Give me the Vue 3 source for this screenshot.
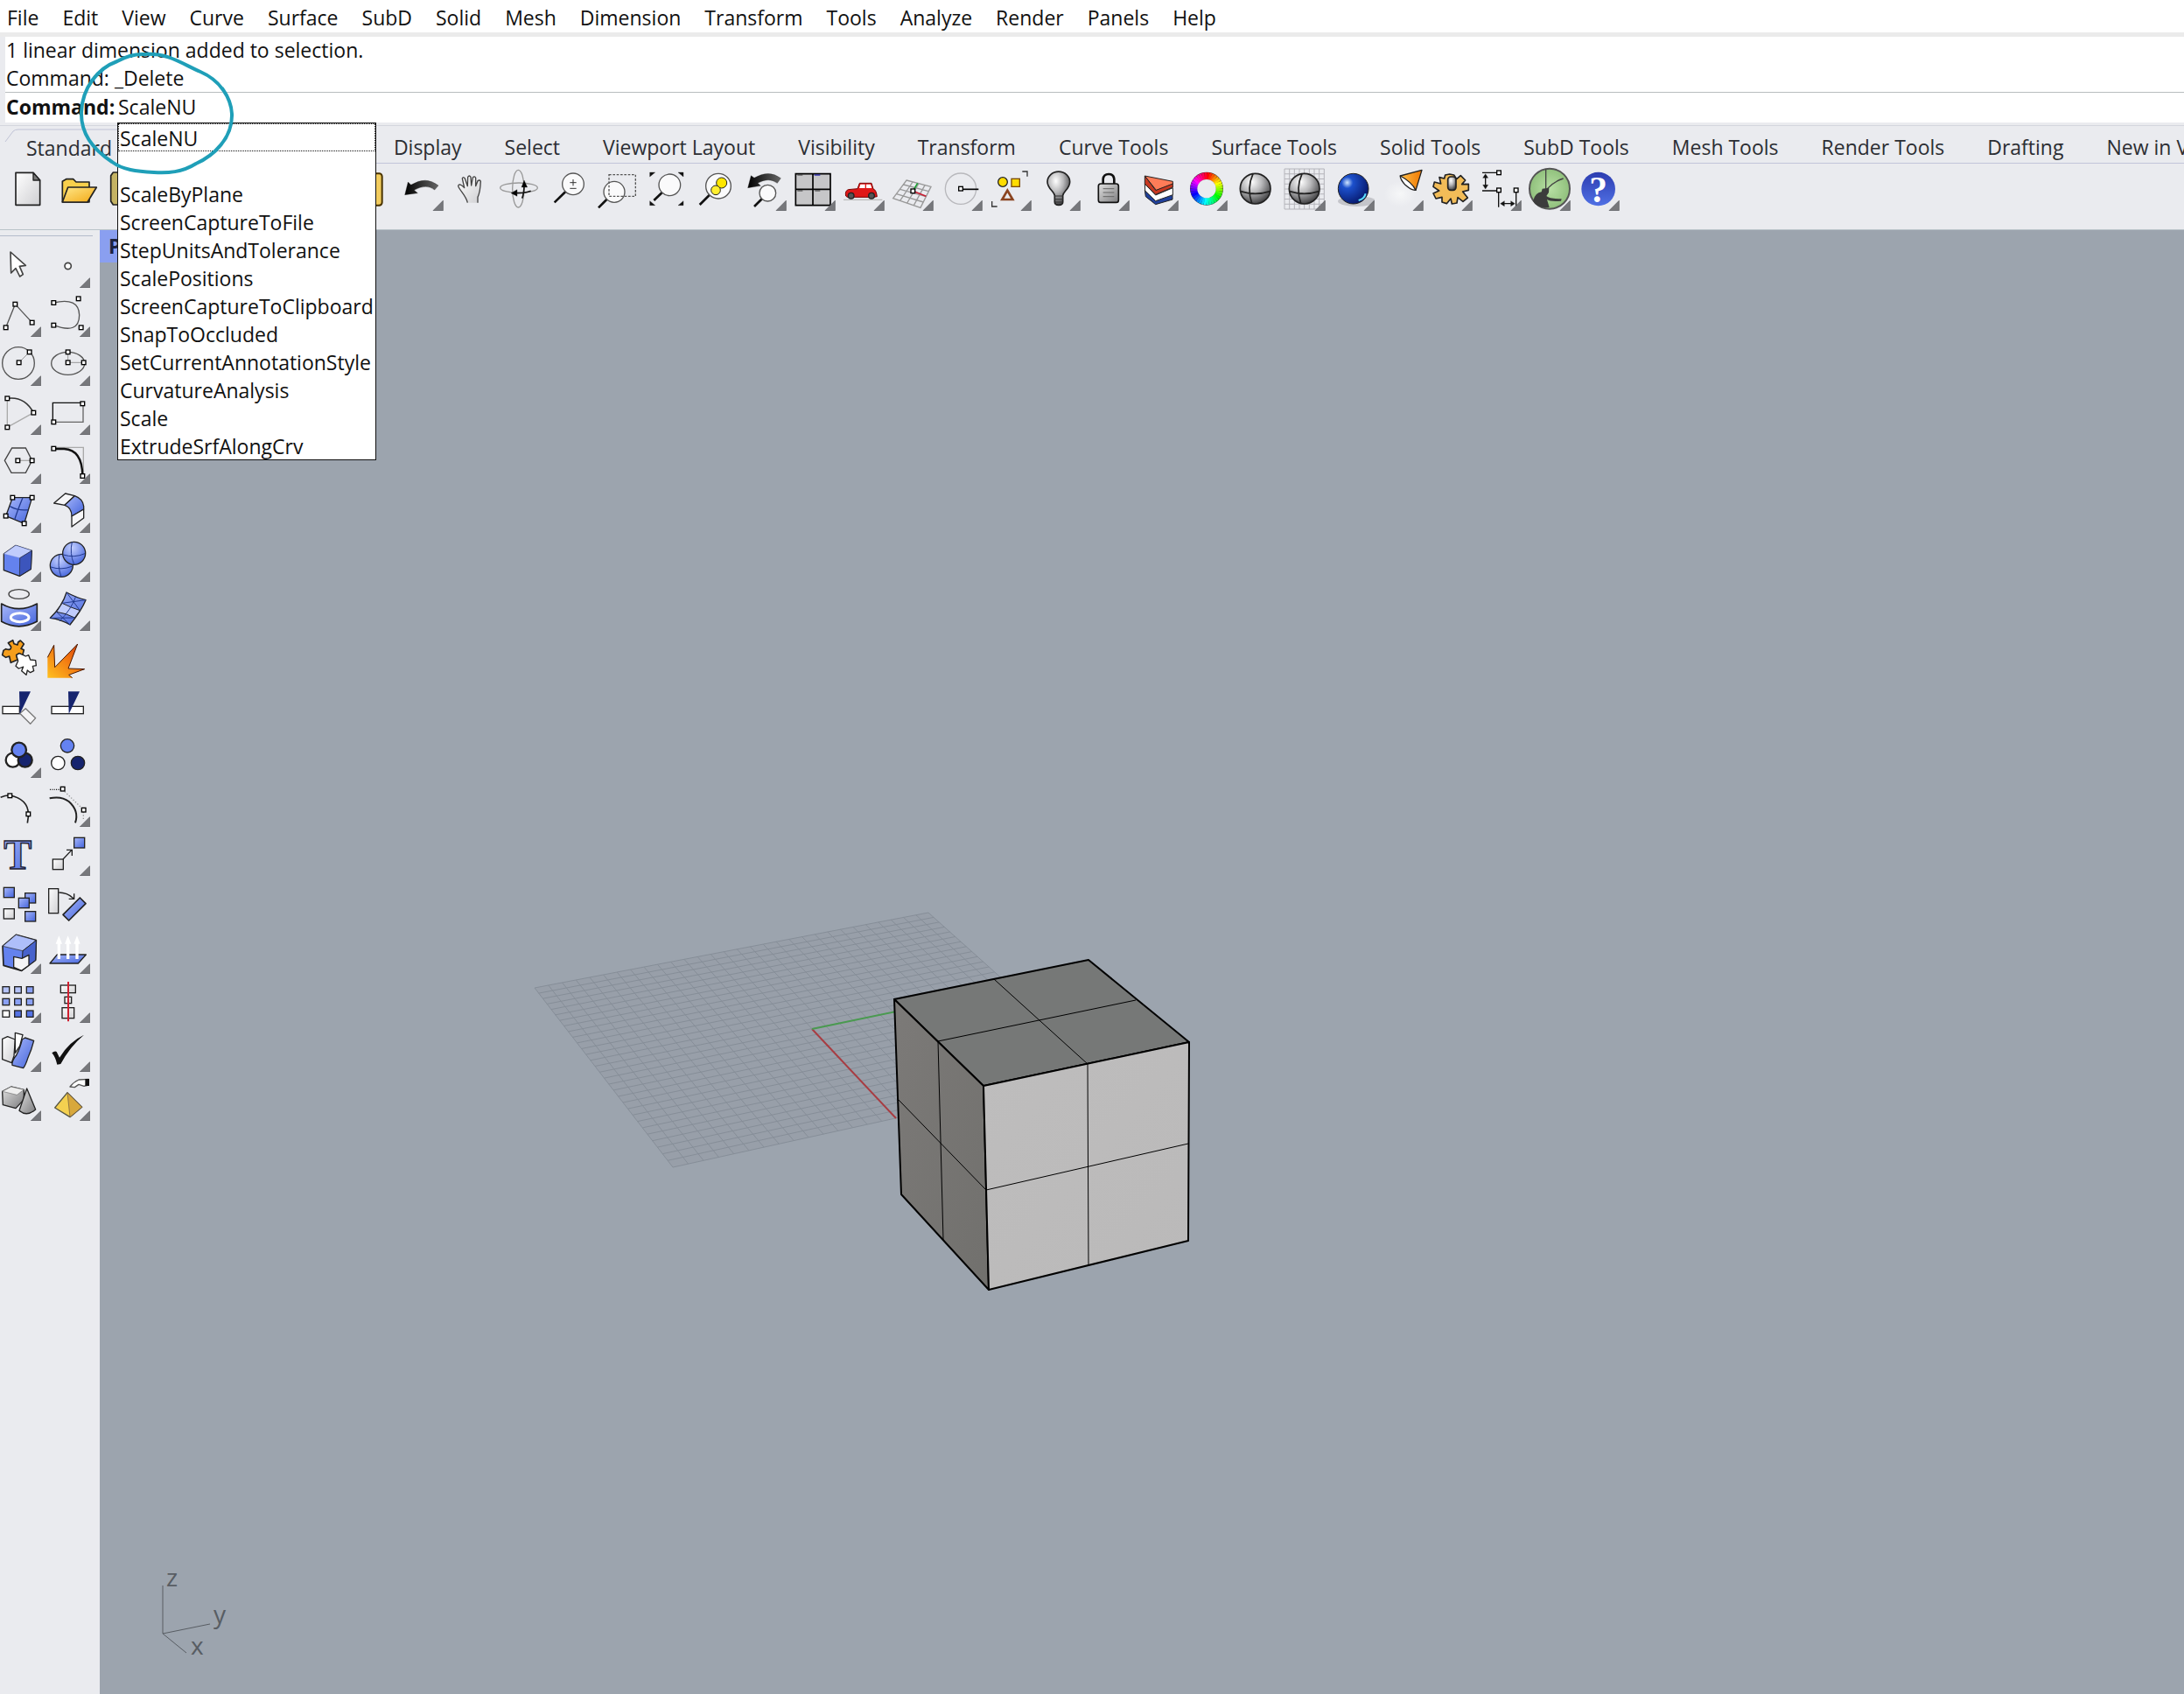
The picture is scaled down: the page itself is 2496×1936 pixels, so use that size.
<script setup>
import { ref } from 'vue'

const menus = ['File', 'Edit', 'View', 'Curve', 'Surface', 'SubD', 'Solid', 'Mesh', 'Dimension', 'Transform', 'Tools', 'Analyze', 'Render', 'Panels', 'Help']
const tabs = ['Standard', 'CPlanes', 'Set View', 'Display', 'Select', 'Viewport Layout', 'Visibility', 'Transform', 'Curve Tools', 'Surface Tools', 'Solid Tools', 'SubD Tools', 'Mesh Tools', 'Render Tools', 'Drafting', 'New in V7']
const suggestions = ['ScaleNU', '', 'ScaleByPlane', 'ScreenCaptureToFile', 'StepUnitsAndTolerance', 'ScalePositions', 'ScreenCaptureToClipboard', 'SnapToOccluded', 'SetCurrentAnnotationStyle', 'CurvatureAnalysis', 'Scale', 'ExtrudeSrfAlongCrv']
const command = ref('ScaleNU')

// Small control-point square centred on x, y
const pt = (x, y, s = 14) => `<rect x="${x - s / 2}" y="${y - s / 2}" width="${s}" height="${s}" fill="#fff" stroke="#000" stroke-width="4"/>`
const box = (x, y, w, h, fill) => `<rect x="${x}" y="${y}" width="${w}" height="${h}" fill="${fill}" stroke="#222" stroke-width="4"/>`
const line = (d, c = '#222', w = 4, extra = '') => `<path d="${d}" fill="none" stroke="${c}" stroke-width="${w}" ${extra}/>`
const shape = (d, fill, w = 4, c = '#222') => `<path d="${d}" fill="${fill}" stroke="${c}" stroke-width="${w}" stroke-linejoin="round"/>`
const ball = (x, y, r, fill, w = 4) => `<circle cx="${x}" cy="${y}" r="${r}" fill="${fill}" stroke="#222" stroke-width="${w}"/>`

const wheel = Array.from({ length: 36 }, (_, i) => {
  const a = (i * 10 - 90) * Math.PI / 180
  const b = (i * 10 - 79) * Math.PI / 180
  const p = (t) => `${(1437 + 44 * Math.cos(t)).toFixed(1)} ${(257 + 44 * Math.sin(t)).toFixed(1)}`
  return `<path d="M${p(a)}L${p(b)}" stroke="hsl(${i * 10} 100% 50%)" stroke-width="24"/>`
}).join('')

const mesh = (x0, x1, y0, y1, n) => {
  let d = ''
  for (let i = 0; i <= n; i++) {
    const x = x0 + (x1 - x0) * i / n
    const y = y0 + (y1 - y0) * i / n
    d += `M${x} ${y0}V${y1}M${x0} ${y}H${x1}`
  }
  return line(d, '#b4b4ba', 3)
}

const sphere = (x) => ball(x, 257, 52, 'url(#steel)', 5) +
  line(`M${x - 8} 206Q${x - 30} 255 ${x - 12} 307M${x - 51} 266Q${x} 282 ${x + 51} 266`, '#222', 5)

const lens = (x, y, r, hx, hy) => line(`M${x - r * 0.7} ${y + r * 0.7}L${hx} ${hy}`, '#111', 8) +
  `<circle cx="${x}" cy="${y}" r="${r}" fill="#fafafb" stroke="#555" stroke-width="4"/>`

// name, left edge of the drawing, has flyout, drawing
const toolbar = [
  ['New', 9, 0, shape('M54 202H114L137 228V313H54Z', 'url(#paper)', 5) + shape('M114 202V228H137Z', '#777', 4)],
  ['Open', 177, 0, shape('M214 303V232L227 224H251L261 234H306V303Z', '#f8d04c', 5) + shape('M214 303L233 252H331L300 303Z', 'url(#gold)', 5)],
  ['Save', 345, 0, shape('M388 201H490V312H388L380 300V212Z', '#c4b364', 5)],
  ['Print', 513, 0, ''],
  ['Properties', 681, 0, ''],
  ['Cut', 849, 0, ''],
  ['Copy', 1017, 0, ''],
  ['Paste', -15, 0, '<rect x="20" y="205" width="90" height="109" rx="10" fill="#f2cc5e" stroke="#4a3400" stroke-width="6"/>'],
  ['Undo', 153, 1, shape('M188 278L199 234L209 244Q260 212 303 246L290 261Q262 238 220 262L232 272Z', 'url(#ink)', 1)],
  ['Pan', 321, 0, shape('M403 305C398 280 375 262 371 248C373 239 382 243 392 254L385 222Q388 214 394 222L403 248L404 217Q409 209 414 217L416 246L421 219Q427 212 431 220V248L438 230Q445 225 448 232C447 258 446 270 438 286V305', 'url(#paper)', 4, '#444')],
  ['Rotate view', 489, 0, '<ellipse cx="577" cy="257" rx="20" ry="64" fill="none" stroke="#999" stroke-width="4"/><ellipse cx="579" cy="254" rx="64" ry="17" fill="none" stroke="#999" stroke-width="4"/>' + shape('M597 228L608 252H588ZM552 272L573 260V283Z', '#000', 1) + line('M597 250Q596 275 590 290M570 272Q600 273 620 265', '#111', 5)],
  ['Zoom dynamic', 657, 0, lens(765, 241, 37, 701, 304) + line('M754 236H776M765 225V247M754 256H776', '#333', 3)],
  ['Zoom window', 825, 0, lens(906, 268, 36, 852, 322) + line('M888 209H979V283H888Z', '#555', 4, 'stroke-dasharray="8 5"')],
  ['Zoom extents', 993, 0, lens(1096, 244, 37, 1042, 297) + shape('M1028 201H1046L1028 216ZM1143 201H1125L1143 216ZM1028 314H1046L1028 299ZM1143 314H1125L1143 299Z', '#111', 1)],
  ['Zoom selected', 1161, 0, lens(1263, 248, 43, 1199, 312) + ball(1274, 237, 18, '#ffe600', 3) + ball(1254, 262, 16, '#ffee30', 3)],
  ['Undo view change', 1329, 1, shape('M1364 254L1375 212L1386 220Q1436 190 1477 221L1465 238Q1436 216 1398 238L1408 247Z', 'url(#ink)', 1) + lens(1432, 272, 28, 1386, 318)],
  ['Four viewports', -3, 1, '<path d="M28 206H147V314H28ZM87 206V314M28 259H147" fill="#c6c6c8" stroke="#000" stroke-width="5"/>' + line('M34 210H52M34 264H52M94 264H112', '#333', 3) + line('M92 210H112', '#22a', 4)],
  ['Render preview', 165, 1, line('M192 295H325', '#bbb', 4) + shape('M200 282Q196 265 208 260L240 257L247 238H288L294 258Q304 260 307 284L296 286H205Z', '#e01818', 3, '#700') + '<path d="M250 242H266V255H246ZM270 242H285L289 255H270Z" fill="#fff"/>' + ball(218, 281, 10, '#555') + ball(288, 281, 10, '#555')],
  ['CPlane', 333, 1, line('M408 228L492 250L456 322L362 290ZM429 234L386 298M450 239L410 306M471 245L433 314M398 243L484 266M386 259L475 284M374 275L466 303', '#999', 4) + line('M430 265L446 238', '#18a030', 5) + line('M430 265L475 283', '#c81e32', 5) + pt(430, 265)],
  ['Object snap', 501, 1, '<circle cx="594" cy="257" r="53" fill="none" stroke="#b8b8bc" stroke-width="4"/>' + line('M594 259H655', '#000', 5) + pt(594, 257)],
  ['Select', 669, 1, ball(738, 234, 16, '#ffdc00') + '<rect x="768" y="223" width="28" height="27" fill="#ffdc00" stroke="#7a4a00" stroke-width="4"/>' + line('M754 263L772 294H736Z', '#8a4420', 8) + line('M805 198H822V215M701 300V318H719', '#333', 4)],
  ['Light', 837, 1, shape('M916 303V280C914 266 891 256 891 233A38 34 0 0 1 968 233C968 256 946 266 944 280V303Q944 313 930 313Q916 313 916 303Z', 'url(#steel)', 5) + line('M916 282H944M916 293H944M917 303H943', '#333', 3)],
  ['Lock', 1005, 1, line('M1082 240V224Q1084 207 1101 207Q1118 207 1120 224V240', '#111', 8) + '<rect x="1066" y="240" width="69" height="64" rx="8" fill="url(#steelflat)" stroke="#111" stroke-width="5"/>' + line('M1082 257H1120M1082 270H1120M1082 284H1120', '#666', 3)],
  ['Layers', 1173, 1, shape('M1225 262L1262 298L1320 276V294L1262 311L1228 284Z', '#20409a', 3) + shape('M1225 240L1262 279L1321 254V278L1262 299L1226 264Z', '#fff', 3) + shape('M1225 213L1262 262L1321 238V252L1262 277L1225 240Z', '#c83820', 3) + shape('M1225 213L1321 232V240L1264 262Z', '#ff7c58', 3)],
  ['Colour', 1341, 1, '<circle cx="1437" cy="257" r="57" fill="#333"/>' + wheel + '<circle cx="1437" cy="257" r="32" fill="#eaebef"/>'],
  ['Shaded', 9, 0, sphere(104)],
  ['Shaded with grid', 177, 1, mesh(204, 340, 189, 327, 8) + sphere(272)],
  ['Rendered', 345, 1, '<ellipse cx="452" cy="300" rx="65" ry="18" fill="#c4c5ca"/>' + ball(440, 257, 52, 'url(#blueball)', 3) + line('M458 297Q478 292 482 274', '#5ce0ff', 6)],
  ['Spotlight', 513, 1, '<ellipse cx="600" cy="275" rx="54" ry="44" fill="url(#glow)"/>' + shape('M675 193L654 262Q612 246 601 213Z', 'url(#orange)', 4) + shape('M601 213Q600 224 618 244Q640 264 654 262Q640 234 601 213Z', '#fff', 4)],
  ['Options', 681, 1, shape('M755 210L770 207L785 210L794 224L808 212L824 228L812 242L835 241V262L815 267L832 288L816 301L798 287L795 306L778 309L774 291L760 308L744 303V286L723 291L714 273L734 264L714 250L718 234L740 240L735 218L752 222Z', '#f2bc58', 5) + '<rect x="764" y="216" width="28" height="46" rx="10" fill="url(#steel)" stroke="#222" stroke-width="5"/>'],
  ['Dimension', 849, 1, line('M882 202H932M882 264H932M893 212V252M938 268V320M998 268V320M950 308H988', '#111', 4) + shape('M893 206L902 220H884ZM893 258L902 244H884ZM944 308L958 299V317ZM994 308L980 299V317Z', '#111', 1) + pt(939, 202) + pt(939, 262) + pt(998, 262)],
  ['Grasshopper', 1017, 1, '<circle cx="1113" cy="257" r="69" fill="url(#leaf)" stroke="#555" stroke-width="6"/>' + line('M1100 262V190M1106 256Q1128 232 1160 222', '#444', 4) + '<path d="M1056 299Q1064 270 1085 268L1088 257L1111 254L1110 270L1102 282Q1114 292 1154 292L1152 299Q1114 302 1104 294L1112 321Q1070 326 1056 299Z" fill="#3c3c3c"/>'],
  ['Help', 1185, 1, '<circle cx="1280" cy="258" r="58" fill="url(#helpblue)"/><text x="1280" y="302" text-anchor="middle" font-family="Liberation Serif, serif" font-weight="bold" font-size="124" fill="#fff">?</text>'],
]

const L = -27
const R = 141
const arm = 'M184 335Q272 368 272 300Q270 238 184 258'
// name, left edge, top edge, has flyout, drawing
const palette = [
  ['Pointer', L, 39, 0, shape('M36 84L88 130L67 133L79 161L68 168L54 140L38 156Z', '#fff', 5, '#444')],
  ['Point', R, 39, 1, '<circle cx="233" cy="132" r="11" fill="#fff" stroke="#444" stroke-width="5"/>'],
  ['Polyline', L, 207, 1, line('M20 343L52 263L110 326', '#555') + pt(20, 343) + pt(52, 263) + pt(110, 326)],
  ['Curve', R, 207, 1, line(arm, '#555') + pt(184, 258) + pt(269, 244) + pt(184, 335) + pt(278, 343)],
  ['Circle', L, 375, 1, '<circle cx="63" cy="465" r="55" fill="none" stroke="#555" stroke-width="4"/>' + line('M65 463L101 427', '#999', 3) + pt(65, 463) + pt(101, 427)],
  ['Ellipse', R, 375, 1, '<ellipse cx="233" cy="466" rx="57" ry="39" fill="none" stroke="#555" stroke-width="4"/>' + line('M233 427V463H287', '#999', 3) + pt(233, 427) + pt(233, 463) + pt(287, 463)],
  ['Arc', L, 543, 1, line('M25 586V685L115 635', '#aaa') + line('M25 586Q84 578 115 635', '#333', 5) + pt(25, 586) + pt(25, 685) + pt(115, 635)],
  ['Rectangle', R, 543, 1, line('M184 667H285V603', '#666') + line('M181 667V601H283', '#111', 4) + pt(283, 604) + pt(184, 667)],
  ['Polygon', L, 711, 1, line('M41 756H88L110 799L88 841H39L16 799Z', '#444') + line('M61 799H110', '#aaa') + pt(61, 799) + pt(110, 799)],
  ['Fillet curves', R, 711, 1, line('M184 754H286V852', '#aaa') + line('M184 759H220Q282 762 283 852', '#111', 7) + pt(184, 758) + pt(283, 852)],
  ['Surface', L, 879, 1, shape('M43 926H110L83 1015L20 989Z', 'url(#blue)') + line('M78 926Q60 970 50 1002M34 956Q62 972 97 968', '#223a90') + pt(43, 926) + pt(110, 926) + pt(20, 989) + pt(83, 1015)],
  ['Loft', R, 879, 1, shape('M185 945L224 912L256 920L222 952Z', '#f6f6f8') + shape('M222 952L256 920Q284 930 287 956V966L246 990Q246 960 222 952Z', 'url(#blue)') + shape('M246 990L287 966V996L246 1026Z', '#f6f6f8')],
  ['Box', L, 27, 1, shape('M13 99L54 70L109 88L106 151L67 175L13 155Z', '#6482ee') + shape('M13 99L54 70L109 88L68 113Z', '#c0ccfc', 1, '#5a74d8') + shape('M68 113L109 88L106 151L67 175Z', '#3c55bc', 2)],
  ['Boolean union', R, 27, 1, ball(211, 139, 39, 'url(#blueglobe)') + line('M174 144Q210 156 246 142M204 100Q196 140 210 178', '#223a90', 3) + ball(254, 97, 39, 'url(#blueglobe)') + line('M217 102Q254 114 291 98M247 58Q238 98 254 135', '#223a90', 3)],
  ['Project', L, 195, 1, '<ellipse cx="65" cy="237" rx="35" ry="16" fill="none" stroke="#444" stroke-width="4"/>' + shape('M5 270Q64 304 127 270V331Q64 364 5 331Z', 'url(#blue)', 5) + '<ellipse cx="68" cy="317" rx="31" ry="15" fill="none" stroke="#fff" stroke-width="9"/>'],
  ['Drape', R, 195, 1, shape('M228 231Q264 250 294 257Q280 292 240 342Q210 324 172 319Q214 278 228 231Z', 'url(#blue)') + shape('M213 268Q240 282 274 293L256 318Q226 302 194 298Z', '#c0ccfc', 3) + line('M260 245Q244 290 204 330M228 231L274 293M213 268L294 257M194 298L240 342M172 319L256 318', '#223a90', 3)],
  ['Join', L, 363, 0, shape('M20 425L12 430L8 446L20 454L32 450L37 472L60 462L56 446L66 440L77 448L82 428L72 424L82 408L70 396L62 402L60 411L48 407L44 395L28 404L38 418Q38 432 20 425Z', '#f59e1c', 5) + shape('M56 446L66 440L80 446L88 450L98 446L104 462L122 464L124 482L112 484L116 500L104 506L94 498L90 514L74 500L80 486L64 492L54 484L62 466Z', '#fff', 4)],
  ['Explode', R, 363, 0, '<path d="M163 524V454L185 412L188 488L266 408L234 492L290 494L236 514L248 524Z" fill="url(#fire)"/>' + line('M163 454L185 412L188 488L266 408L234 492L290 494L236 514L248 524', '#4a1800', 3)],
  ['Trim', L, 531, 0, box(9, 622, 58, 25, '#fff') + shape('M88 629L122 662L104 682L68 646Z', '#f4f4f6', 4, '#777') + '<path d="M66 571H105L68 648Z" fill="#16246e"/>'],
  ['Split', R, 531, 0, box(177, 622, 109, 25, '#fff') + '<path d="M234 571H273L236 648Z" fill="#16246e"/>'],
  ['Group', L, 699, 1, ball(44, 806, 24, '#fff', 7) + ball(86, 806, 24, '#16246e', 7) + ball(65, 771, 25, '#6482f0', 7)],
  ['Ungroup', R, 699, 0, ball(231, 757, 23, '#6482f0') + ball(199, 816, 23, '#fff') + ball(267, 816, 23, '#16246e')],
  ['Edit points', L, 867, 0, line('M2 934Q20 926 34 927Q96 940 97 990V1000L94 1022', '#222', 5) + pt(34, 928) + pt(97, 991)],
  ['Control points', R, 867, 1, line('M170 937Q210 928 236 948Q272 980 258 1021', '#222', 6) + line('M171 907H208', '#111', 4, 'stroke-dasharray="3 4"') + line('M222 914L280 970M286 984V1014', '#999', 4, 'stroke-dasharray="4 6"') + pt(215, 905) + pt(287, 977)],
  ['Text', L, 15, 0, '<text x="61" y="160" text-anchor="middle" font-family="Liberation Serif, serif" font-weight="bold" font-size="144" fill="url(#blue)" stroke="#223" stroke-width="4">T</text>'],
  ['Move', R, 15, 1, line('M216 126L246 94M228 94H247V114', '#222', 4) + box(181, 126, 36, 35, 'url(#paper)') + box(254, 52, 36, 35, 'url(#blue)')],
  ['Copy', L, 183, 0, box(13, 223, 36, 34, 'url(#blue)') + box(86, 242, 36, 34, 'url(#blue)') + box(64, 259, 36, 34, 'url(#blue)') + box(13, 296, 36, 34, 'url(#paper)') + box(86, 305, 36, 34, 'url(#blue)')],
  ['Rotate', R, 183, 0, box(167, 227, 33, 84, 'url(#paper)') + line('M202 240Q230 240 252 260M236 262H254V244', '#222', 4) + shape('M274 258L294 278L236 336L216 316Z', 'url(#blue)', 5)],
  ['Cage edit', L, 351, 1, shape('M9 424L55 385L124 404L122 472L74 508L12 490Z', '#6482ee', 5) + shape('M9 424L55 385L124 404L78 440Z', '#aebefa', 2) + shape('M78 440L124 404L122 472L74 508Z', '#4762cc', 3) + shape('M47 460L75 466L99 454V490L74 508L47 496Z', '#f4f4f6', 4)],
  ['Extrude', R, 351, 1, shape('M196 453H295L268 483H171Z', 'url(#blue)') + line('M202 468V412M233 468V412M264 468V412', '#fff', 10) + '<path d="M202 388L213 416H191ZM233 388L244 416H222ZM264 388L275 416H253Z" fill="#fff"/>'],
  ['Array', L, 519, 1, [0, 1, 2].map(r => [0, 1, 2].map(c => box(9 + c * 41, 563 + r * 41, 23, 22, r === 2 && c === 0 ? '#fff' : ['#b4c2f8', '#8aa0f4', '#5472e4'][Math.min(2, Math.max(r, c - 1))])).join('')).join('')],
  ['Align', R, 519, 1, box(208, 558, 51, 26, 'url(#paper)') + box(222, 598, 23, 22, 'url(#paper)') + box(213, 635, 41, 36, 'url(#paper)') + line('M234 546V682', '#d02030', 6)],
  ['Flow', L, 687, 1, shape('M8 742L26 734L52 744L48 800L40 824L8 812Z', 'url(#paper)') + shape('M52 721L78 728L68 766L52 790Z', '#fff') + shape('M76 744L86 738L116 748Q108 780 96 806Q88 832 80 842L42 832Q40 816 56 798Q68 776 76 744Z', 'url(#blue)')],
  ['Check', R, 687, 1, '<path d="M178 790Q188 782 194 786L204 806Q236 752 288 728Q240 768 208 828L196 830Q190 804 178 790Z" fill="#111"/>'],
  ['Primitives', L, 855, 1, shape('M8 922L38 906L82 916V950L54 980L10 968Z', 'url(#steelflat)') + shape('M8 922L38 906L82 916L58 934Z', '#eee', 2, '#777') + shape('M92 912L122 984Q92 1010 66 988Z', 'url(#steelflat)')],
  ['Pyramid', R, 855, 1, shape('M231 926L281 976L240 1010L188 978Z', '#f4d050', 4, '#554') + shape('M231 926L281 976L240 1010Z', '#d8a83c', 2, '#654') + shape('M240 906Q252 890 270 882L304 880V900L288 904L270 898L256 908Z', '#fff', 4, '#555') + '<path d="M292 879H306V903H292Z" fill="#111"/>'],
]

// Ground grid: unit square mapped on to its perspective quad
const quad = [[611, 1129], [769, 1334], [1264, 1225], [1061, 1043]]
const project = (() => {
  const [[x0, y0], [x1, y1], [x2, y2], [x3, y3]] = quad
  const dx1 = x1 - x2, dx2 = x3 - x2, sx = x0 - x1 + x2 - x3
  const dy1 = y1 - y2, dy2 = y3 - y2, sy = y0 - y1 + y2 - y3
  const den = dx1 * dy2 - dx2 * dy1
  const g = (sx * dy2 - dx2 * sy) / den
  const h = (dx1 * sy - sx * dy1) / den
  return (u, v) => {
    const w = g * u + h * v + 1
    return [
      ((x1 - x0 + g * x1) * u + (x3 - x0 + h * x3) * v + x0) / w,
      ((y1 - y0 + g * y1) * u + (y3 - y0 + h * y3) * v + y0) / w,
    ].map(n => n.toFixed(1)).join(' ')
  }
})()
const cells = 30
const gridPath = Array.from({ length: cells + 1 }, (_, i) => {
  const t = i / cells
  return `M${project(t, 0)}L${project(t, 1)}M${project(0, t)}L${project(1, t)}`
}).join('')
</script>

<template>
  <div class="app">
    <svg class="defs" aria-hidden="true">
      <defs>
        <linearGradient id="paper" x1="0" y1="0" x2="1" y2="1"><stop offset="0" stop-color="#fff" /><stop offset="1" stop-color="#cfcfd2" /></linearGradient>
        <linearGradient id="gold" x1="0" y1="0" x2="1" y2="1"><stop offset="0" stop-color="#ffe88a" /><stop offset="1" stop-color="#f2a814" /></linearGradient>
        <linearGradient id="ink" x1="0" y1="0" x2="1" y2="0"><stop offset="0" stop-color="#000" /><stop offset="1" stop-color="#666" /></linearGradient>
        <radialGradient id="steel" cx="0.38" cy="0.28" r="0.75"><stop offset="0" stop-color="#fff" /><stop offset="0.45" stop-color="#b8b8ba" /><stop offset="1" stop-color="#3c3c3e" /></radialGradient>
        <linearGradient id="steelflat" x1="0" y1="0" x2="1" y2="1"><stop offset="0" stop-color="#e2e2e2" /><stop offset="1" stop-color="#7c7c7e" /></linearGradient>
        <radialGradient id="blueball" cx="0.3" cy="0.3" r="0.75"><stop offset="0" stop-color="#cfe6ff" /><stop offset="0.25" stop-color="#1c50cc" /><stop offset="1" stop-color="#06186c" /></radialGradient>
        <linearGradient id="orange" x1="0" y1="0" x2="1" y2="0"><stop offset="0" stop-color="#ffc04c" /><stop offset="1" stop-color="#f07800" /></linearGradient>
        <radialGradient id="glow"><stop offset="0" stop-color="#f6f7f8" /><stop offset="1" stop-color="#eaebef" /></radialGradient>
        <radialGradient id="leaf"><stop offset="0" stop-color="#b8e0a4" /><stop offset="1" stop-color="#90c07c" /></radialGradient>
        <linearGradient id="helpblue" x1="0" y1="0" x2="0" y2="1"><stop offset="0" stop-color="#2c3cb0" /><stop offset="1" stop-color="#5070e4" /></linearGradient>
        <linearGradient id="blue" x1="0" y1="0" x2="1" y2="1"><stop offset="0" stop-color="#a8b8fa" /><stop offset="1" stop-color="#4464dc" /></linearGradient>
        <radialGradient id="blueglobe" cx="0.4" cy="0.25" r="0.8"><stop offset="0" stop-color="#c4d0ff" /><stop offset="1" stop-color="#4464dc" /></radialGradient>
        <linearGradient id="fire" x1="0" y1="1" x2="1" y2="0"><stop offset="0" stop-color="#ffc020" /><stop offset="0.6" stop-color="#f07010" /><stop offset="1" stop-color="#c83008" /></linearGradient>
        <linearGradient id="facet" x1="0" y1="0" x2="1" y2="1"><stop offset="0" stop-color="#bebdbd" /><stop offset="1" stop-color="#bab9b9" /></linearGradient>
        <linearGradient id="shade" x1="0" y1="0" x2="1" y2="1"><stop offset="0" stop-color="#7c7a78" /><stop offset="1" stop-color="#71706d" /></linearGradient>
      </defs>
    </svg>

    <nav class="menubar">
      <button v-for="m in menus" :key="m" type="button">{{ m }}</button>
    </nav>

    <section class="command">
      <p>1 linear dimension added to selection.</p>
      <p>Command: _Delete</p>
      <div class="prompt">
        <label for="command">Command:</label>
        <div class="entry">
          <input id="command" v-model="command" type="text" autocomplete="off" spellcheck="false">
          <ul class="suggestions" role="listbox">
            <li v-for="(s, i) in suggestions" :key="i" role="option" :class="{ focused: i === 0 }">{{ s }}</li>
          </ul>
        </div>
      </div>
      <svg class="ring" viewBox="86 54 190 152" aria-hidden="true">
        <path d="M166 62C192 60 210 74 229 82C252 92 264 112 265 130C266 158 244 178 224 187C208 197 192 198 176 197C156 196 140 194 128 185C108 172 92 154 93 128C94 100 112 78 134 70Q150 61 166 62Z" />
      </svg>
    </section>

    <div class="tabs" role="tablist">
      <svg class="tab-edge" viewBox="0 0 134 20" aria-hidden="true"><path d="M6 18L15 6Q17 4 21 4H134" /></svg>
      <button v-for="(t, i) in tabs" :key="t" type="button" role="tab" :aria-selected="i === 0">{{ t }}</button>
    </div>

    <div class="toolbar">
      <button v-for="[name, x, flyout, art] in toolbar" :key="name" type="button" :aria-label="name">
        <svg :viewBox="`${x} 171 168 162`">
          <g v-html="art" />
          <path v-if="flyout" :d="`M${x + 166} 298V332H${x + 132}Z`" class="flyout" />
        </svg>
      </button>
    </div>

    <main class="workspace">
      <aside class="palette">
        <button v-for="[name, x, y, flyout, art] in palette" :key="name" type="button" :aria-label="name">
          <svg :viewBox="`${x} ${y} 168 168`">
            <g v-html="art" />
            <path v-if="flyout" :d="`M${x + 167} ${y + 134}V${y + 168}H${x + 133}Z`" class="flyout" />
          </svg>
        </button>
      </aside>

      <section class="viewport">
        <h2>Perspective</h2>
        <svg class="scene" aria-label="Box on the construction plane">
          <g transform="translate(-114 -263)">
            <path class="ground" :d="`M${project(0, 0)}L${project(1, 0)}L${project(1, 1)}L${project(0, 1)}Z`" />
            <path class="grid" :d="gridPath" />
            <path class="axis-x" d="M928 1176L1024 1278" />
            <path class="axis-y" d="M928 1176L1024 1156" />
            <path class="top" d="M1022 1142L1244 1097L1359 1191L1124 1241Z" />
            <path class="side" d="M1022 1142L1124 1241L1130 1474L1030 1365Z" />
            <path class="front" d="M1124 1241L1359 1191L1358 1418L1130 1474Z" />
            <path class="iso" d="M1136 1119L1243 1216L1244 1446M1298 1143L1072 1190L1078 1417M1026 1256L1127 1360L1358 1307" />
          </g>
        </svg>
        <svg class="gnomon" viewBox="0 0 110 110" aria-hidden="true">
          <path d="M16 22V77L70 66M16 77L43 99" />
          <text x="20" y="23">z</text>
          <text x="74" y="65">y</text>
          <text x="48" y="101">x</text>
        </svg>
      </section>
    </main>
  </div>
</template>

<style>
body {
  margin: 0;
}
</style>

<style scoped>
.app {
  display: flex;
  flex-direction: column;
  min-height: 100vh;
  overflow: hidden;
  background: #eaebef;
  color: #111;
  font: 23px/32px "Open Sans", "Noto Sans", sans-serif;
}

.defs {
  position: absolute;
  width: 0;
  height: 0;
}

button {
  flex: none;
  padding: 0;
  border: 0;
  background: none;
  color: inherit;
  font: inherit;
  white-space: nowrap;
}

.menubar {
  display: flex;
  gap: 27px;
  padding: 4px 8px 1px;
  background: #fff;
  border-bottom: 5px solid #ebebeb;
}

.command {
  position: relative;
  z-index: 2;
  margin-left: 6px;
  background: #fff;
}

p {
  margin: 0;
  padding-left: 1px;
  line-height: 31px;
}

p + p {
  line-height: 32px;
}

.prompt {
  display: flex;
  gap: 4px;
  height: 34px;
  padding-left: 1px;
  border-top: 1px solid #b8bdbf;
}

label {
  width: 124px;
  font-weight: 700;
}

.entry {
  position: relative;
  flex: 1;
}

input {
  width: 100%;
  height: 32px;
  padding: 0;
  border: 0;
  outline: 0;
  background: none;
  color: inherit;
  font: inherit;
}

.suggestions {
  position: absolute;
  top: 34px;
  left: -1px;
  box-sizing: border-box;
  width: 296px;
  margin: 0;
  padding: 0;
  border: 1px solid #111;
  background: #fff;
  list-style: none;
}

.suggestions li {
  box-sizing: border-box;
  height: 32px;
  padding-left: 1px;
  border: 1px dotted transparent;
  line-height: 32px;
}

.suggestions .focused {
  border-color: #111;
}

.ring {
  position: absolute;
  top: 12px;
  left: 80px;
  width: 190px;
  height: 152px;
  pointer-events: none;
}

.ring path {
  fill: none;
  stroke: #1f9fb8;
  stroke-width: 4;
}

.tabs {
  position: relative;
  display: flex;
  gap: 49px;
  height: 36px;
  margin-top: 3px;
  padding: 6px 0 0 30px;
  border-top: 1px solid #d4d6de;
  border-bottom: 1px solid #c2c5da;
  color: #2c2e33;
}

.tabs button {
  line-height: 36px;
}

.tabs [aria-selected="true"] {
  margin: 0 0 -1px -30px;
  padding-left: 30px;
  background: #eaebef;
}

.tab-edge {
  position: absolute;
  top: 0;
  left: 0;
  width: 134px;
  height: 20px;
}

.tab-edge path {
  fill: none;
  stroke: #c0c3d6;
}

.toolbar {
  display: flex;
  align-items: flex-start;
  height: 75px;
  padding-left: 3px;
  border-bottom: 1px solid #b9c3c9;
}

.toolbar svg {
  display: block;
  width: 56px;
  height: 54px;
}

.flyout {
  fill: #77787c;
  stroke: #55565a;
  stroke-width: 2;
}

.workspace {
  display: flex;
  flex: 1;
}

.palette {
  display: grid;
  grid-template-columns: 56px 56px;
  align-content: start;
  width: 123px;
  margin-left: -9px;
  padding-top: 6px;
}

.palette::before {
  content: "";
  grid-column: 1 / -1;
  height: 3px;
  margin-right: -3px;
  border-top: 1px solid #b4bccb;
}

.palette svg {
  display: block;
  width: 56px;
  height: 56px;
}

.viewport {
  position: relative;
  flex: 1;
  background: #9ca4ae;
}

h2 {
  position: absolute;
  top: 0;
  left: 0;
  margin: 0;
  padding: 0 10px;
  background: #8a9ff0;
  color: #1c2340;
  font-size: 23px;
  line-height: 37px;
}

.scene {
  position: absolute;
  inset: 0;
  width: 100%;
  height: 100%;
}

.ground {
  fill: #989fa9;
}

.grid {
  fill: none;
  stroke: #868e98;
}

.axis-x,
.axis-y {
  stroke: #a83c42;
  stroke-width: 2;
}

.axis-y {
  stroke: #4a9a50;
}

.top,
.side,
.front {
  fill: #767877;
  stroke: #000;
  stroke-width: 2;
  stroke-linejoin: round;
}

.side {
  fill: url(#shade);
}

.front {
  fill: url(#facet);
}

.iso {
  fill: none;
  stroke: #000;
}

.gnomon {
  position: absolute;
  bottom: 36px;
  left: 56px;
  width: 110px;
  height: 110px;
  overflow: visible;
}

.gnomon path {
  fill: none;
  stroke: #585d63;
}

.gnomon text {
  fill: #585d63;
  font-size: 28px;
}
</style>
